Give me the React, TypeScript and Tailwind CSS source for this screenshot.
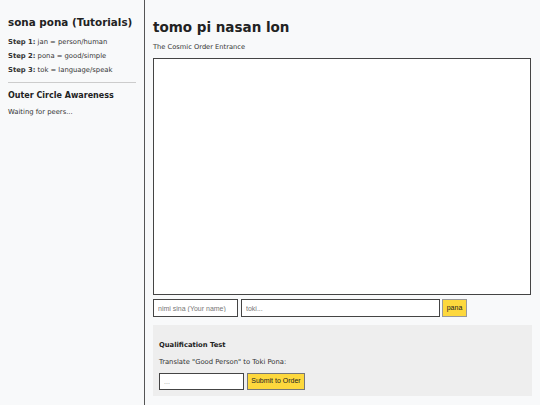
export default function App() {
  return (
    <div className="flex h-[405px] w-[540px] overflow-hidden bg-[#f8f9fa] text-[#222]" style={{ fontFamily: '"DejaVu Sans", Verdana, sans-serif' }}>
      <aside className="w-[145px] shrink-0 border-r border-[#555] px-[8px] pt-[15px]">
        <h2 className="whitespace-nowrap text-[10.4px] font-bold leading-[14px] text-[#222]">sona pona (Tutorials)</h2>
        <div className="mt-[6px] text-[6.8px] leading-[14px] text-[#333]">
          <p><b>Step 1:</b> jan = person/human</p>
          <p><b>Step 2:</b> pona = good/simple</p>
          <p><b>Step 3:</b> tok = language/speak</p>
        </div>
        <hr className="mt-[5px] border-t border-[#ccc]" />
        <h3 className="mt-[7px] whitespace-nowrap text-[8px] font-bold leading-[12px] text-[#222]">Outer Circle Awareness</h3>
        <p className="mt-[5px] text-[6.8px] leading-[10px] text-[#333]">Waiting for peers...</p>
      </aside>
      <main className="flex flex-1 flex-col pl-[8px] pr-[8px] pt-[18px]">
        <h1 className="whitespace-nowrap text-[13.5px] font-bold leading-[18px] text-[#222]">tomo pi nasan lon</h1>
        <p className="mt-[6px] text-[6.7px] leading-[10px] text-[#333]">The Cosmic Order Entrance</p>
        <div className="mt-[6px] h-[237px] w-[378px] border border-[#444] bg-white"></div>
        <div className="mt-[4px] flex items-center" style={{ fontFamily: '"Liberation Sans", Arial, sans-serif' }}>
          <input className="h-[18px] w-[85px] border border-[#444] bg-white px-[4px] text-[7px] outline-none placeholder:text-[#777]" placeholder="nimi sina (Your name)" />
          <input className="ml-[3px] h-[18px] w-[199px] border border-[#444] bg-white px-[4px] text-[7px] outline-none placeholder:text-[#777]" placeholder="toki..." />
          <button className="ml-[2px] h-[18px] w-[25px] border border-[#999] bg-[#fdd83d] text-[7px] text-[#222]">pana</button>
        </div>
        <div className="mt-[8px] h-[71px] w-[379px] bg-[#eeeeee] px-[6px] pt-[15px]">
          <h4 className="text-[6.8px] font-bold leading-[10px] text-[#222]">Qualification Test</h4>
          <p className="mt-[7px] text-[6.8px] leading-[10px] text-[#333]">Translate "Good Person" to Toki Pona:</p>
          <div className="mt-[6px] flex items-center" style={{ fontFamily: '"Liberation Sans", Arial, sans-serif' }}>
            <input className="h-[17px] w-[85px] border border-[#444] bg-white px-[4px] text-[7px] outline-none placeholder:text-[#999]" placeholder="..." />
            <button className="ml-[3px] h-[17px] w-[58px] border border-[#777] bg-[#fdd83d] text-[7px] text-[#222]">Submit to Order</button>
          </div>
        </div>
      </main>
    </div>
  );
}
